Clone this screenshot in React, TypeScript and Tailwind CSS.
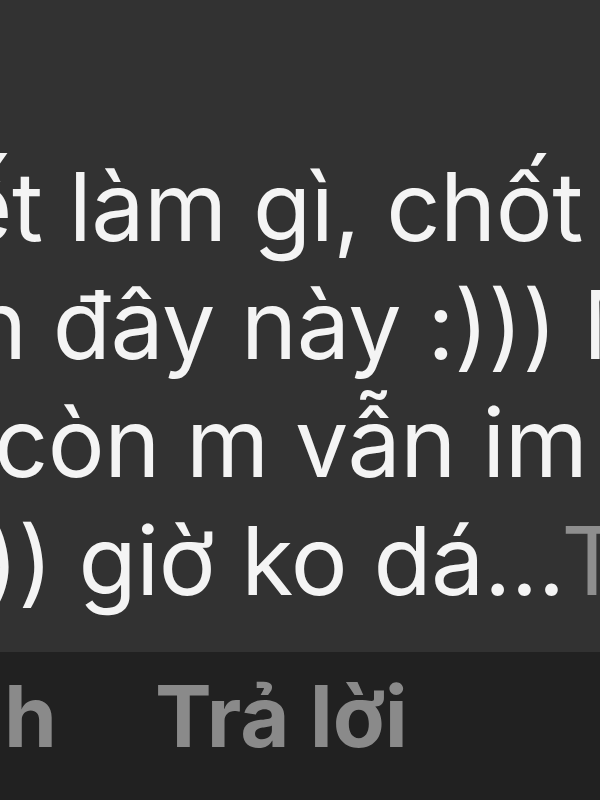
import React from "react";

export default function App() {
  return (
    <div
      className="w-[600px] h-[800px] overflow-hidden flex flex-col bg-[#323232]"
      style={{ fontFamily: "Inter, 'Noto Sans', sans-serif" }}
    >
      <div className="h-[652px] shrink-0 pt-[148px] text-[95px] leading-[118px] text-[#f4f4f4] tracking-[-0.5px]">
        <div className="whitespace-nowrap ml-[-43px]">ết làm gì, chốt</div>
        <div className="whitespace-nowrap ml-[-29px]">n đây này :))) M</div>
        <div className="whitespace-nowrap ml-[-6px]"> còn m vẫn im</div>
        <div className="whitespace-nowrap ml-[-16px]">
          )) giờ ko dá...<span className="text-[#8e8e8e]">Thêm</span>
        </div>
      </div>
      <div className="flex-1 bg-[#212121] flex items-start pt-[22px] text-[#8a8a8a] font-bold text-[85px] leading-none whitespace-nowrap">
        <span className="ml-[4px]">h</span>
        <span className="ml-[98px]">Trả lời</span>
      </div>
    </div>
  );
}
